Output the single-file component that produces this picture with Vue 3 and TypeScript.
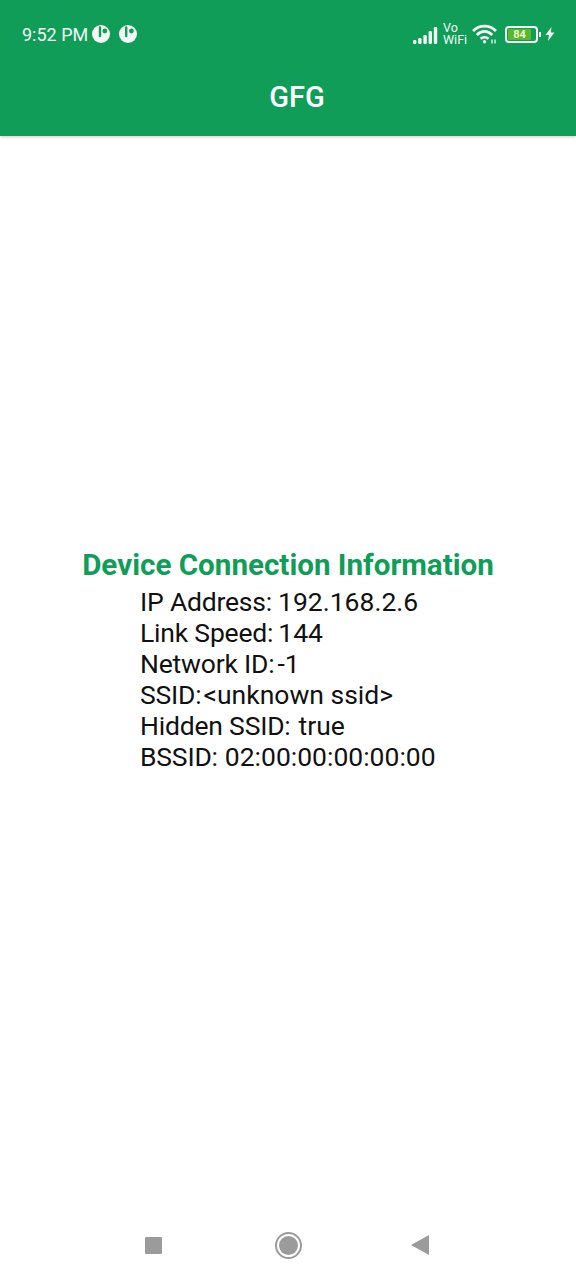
<template>
  <div class="screen">
    <header class="app-header">
      <div class="status-bar">
        <div class="status-left">
          <span class="clock">9:52 PM</span>
          <svg class="pie first" viewBox="0 0 18 18">
            <circle cx="9" cy="9" r="9" fill="#f4f8f5" />
            <path d="M6.800 2.500a1.200 1.200 0 0 1 2.400 0v8.500a1.200 1.200 0 0 1-2.400 0z" fill="#0f9d58" />
            <circle cx="12.800" cy="6" r="2.400" fill="#0f9d58" />
          </svg>
          <svg class="pie second" viewBox="0 0 18 18">
            <circle cx="9" cy="9" r="9" fill="#f4f8f5" />
            <path d="M6 2.500a1.200 1.200 0 0 1 2.400 0v8.500a1.200 1.200 0 0 1-2.400 0z" fill="#0f9d58" />
            <circle cx="12.400" cy="6" r="2.400" fill="#0f9d58" />
          </svg>
        </div>
        <div class="status-right">
          <svg class="signal" width="25" height="17" viewBox="0 0 25 17">
            <rect v-for="(h, i) in signalBars" :key="i" :x="i * 5.200" :y="17 - h" width="3.400" :height="h" rx="1.200" fill="#f4f8f5" />
          </svg>
          <span class="vowifi">Vo<br />WiFi</span>
          <svg class="wifi" width="25" height="20" viewBox="0 0 25 20" fill="none" stroke="#f4f8f5" stroke-width="2.800">
            <path d="M1 7C7.500 .5 17.500 .5 24 7" />
            <path d="M4.800 11C9.500 6.300 15.500 6.300 20.200 11" />
            <path d="M8.500 14.800C10.800 12.800 14.200 12.800 16.500 14.800" />
            <circle cx="12.500" cy="17.800" r="1.700" fill="#f4f8f5" stroke="none" />
            <path d="M20 15.500v4M23 15.500v4" stroke-width="1.300" />
          </svg>
          <div class="battery">
            <div class="battery-body"><span class="battery-fill">84</span></div>
            <span class="battery-cap"></span>
          </div>
          <svg class="bolt" width="10" height="14" viewBox="0 0 10 14">
            <path d="M6.500 0L0.500 8H4L3 14L9.500 5.500H5.800z" fill="#f4f8f5" />
          </svg>
        </div>
      </div>
      <div class="toolbar">GFG</div>
    </header>

    <main class="content">
      <h1 class="info-title">Device Connection Information</h1>
      <div class="info-list">
        <div v-for="row in rows" :key="row.label" class="info-row">
          <span class="info-label">{{ row.label }}</span><span :style="{ marginLeft: row.gap + 'px' }">{{ row.value }}</span>
        </div>
      </div>
    </main>

    <nav class="nav-bar">
      <span class="nav-square"></span>
      <span class="nav-home"><span class="nav-home-dot"></span></span>
      <span class="nav-back"></span>
    </nav>
  </div>
</template>

<script setup lang="ts">
interface InfoRow {
  label: string
  value: string
  gap: number
}

const signalBars = [4, 6, 9, 13, 17]

const rows: InfoRow[] = [
  { label: 'IP Address:', value: '192.168.2.6', gap: 6 },
  { label: 'Link Speed:', value: '144', gap: 5 },
  { label: 'Network ID:', value: '-1', gap: 3 },
  { label: 'SSID:', value: '<unknown ssid>', gap: 2 },
  { label: 'Hidden SSID:', value: 'true', gap: 8 },
  { label: 'BSSID:', value: '02:00:00:00:00:00', gap: 7 }
]
</script>

<style>
html,
body {
  margin: 0;
  background: #fff;
}
</style>

<style scoped>
.screen {
  width: 576px;
  height: 1280px;
  display: flex;
  flex-direction: column;
  overflow: hidden;
  background: #fff;
  font-family: Roboto, "Liberation Sans", sans-serif;
}

.app-header {
  height: 136px;
  flex-shrink: 0;
  background: #0f9d58;
  color: #fff;
  box-shadow: 0 1px 3px rgb(0 0 0 / 0.2);
  z-index: 1;
}

.status-bar {
  height: 68px;
  display: flex;
  align-items: center;
  justify-content: space-between;
  padding: 0 21px 0 22px;
  box-sizing: border-box;
}

.status-left,
.status-right {
  display: flex;
  align-items: center;
}

.clock {
  font-size: 18px;
  color: #f4f8f5;
}

.pie {
  width: 18px;
  height: 18px;
}

.pie.first {
  margin-left: 4px;
}

.pie.second {
  margin-left: 9px;
}

.signal {
  margin-top: 3px;
}

.vowifi {
  margin-left: 5px;
  width: 26px;
  font-size: 12.500px;
  line-height: 12px;
  color: #f4f8f5;
}

.wifi {
  margin-left: 3px;
}

.battery {
  margin-left: 8px;
  display: flex;
  align-items: center;
}

.battery-body {
  width: 33px;
  height: 17px;
  box-sizing: border-box;
  border: 2px solid #f4f8f5;
  border-radius: 4px;
  padding: 1px;
  display: flex;
}

.battery-fill {
  width: 85%;
  background: #58b82f;
  border-radius: 1px;
  color: #f1f6c8;
  font-size: 11px;
  font-weight: 700;
  line-height: 11px;
  text-align: center;
}

.battery-cap {
  width: 2px;
  height: 5px;
  margin-left: 1px;
  background: #f4f8f5;
}

.bolt {
  margin-left: 4px;
}

.toolbar {
  height: 68px;
  display: flex;
  align-items: center;
  justify-content: center;
  padding-left: 18px;
  padding-bottom: 10px;
  box-sizing: border-box;
  font-size: 29px;
  font-weight: 500;
}

.content {
  flex: 1;
  display: flex;
  flex-direction: column;
  justify-content: center;
}

.info-title {
  margin: 0 0 4px;
  text-align: center;
  font-size: 29.600px;
  line-height: 33px;
  font-weight: 700;
  color: #0f9d58;
}

.info-list {
  padding-left: 140px;
  color: #111;
  font-size: 26.500px;
  line-height: 31px;
}

.info-row {
  white-space: nowrap;
}

.info-label {
  letter-spacing: -0.2px;
}

.nav-bar {
  height: 96px;
  flex-shrink: 0;
  display: flex;
  align-items: center;
  padding: 26px 0 0 145px;
  box-sizing: border-box;
}

.nav-square {
  width: 17px;
  height: 17px;
  background: #9b9b9b;
  border-radius: 1px;
}

.nav-home {
  width: 27px;
  height: 27px;
  margin-left: 113px;
  box-sizing: border-box;
  border: 2px solid #9b9b9b;
  border-radius: 50%;
  display: flex;
  align-items: center;
  justify-content: center;
}

.nav-home-dot {
  width: 19px;
  height: 19px;
  border-radius: 50%;
  background: #9b9b9b;
}

.nav-back {
  margin-left: 109px;
  width: 0;
  height: 0;
  border-top: 10px solid transparent;
  border-bottom: 10px solid transparent;
  border-right: 18px solid #9b9b9b;
}
</style>
